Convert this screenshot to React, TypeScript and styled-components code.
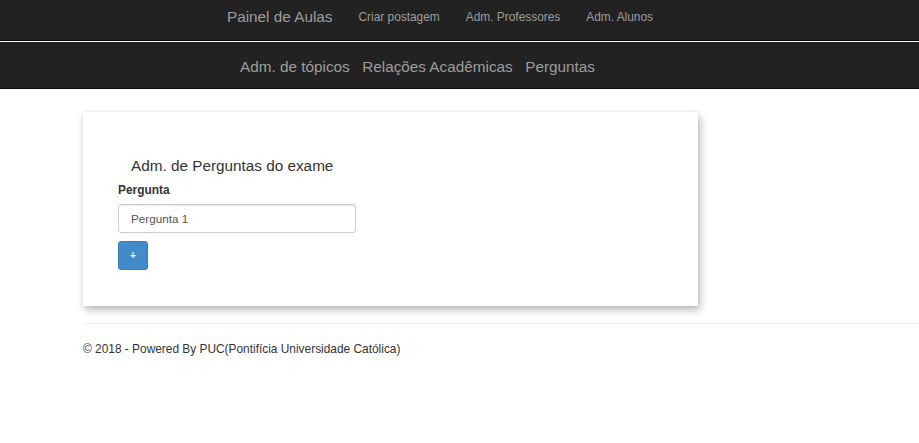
import React from "react";
import styled, { createGlobalStyle } from "styled-components";

const Global = createGlobalStyle`
  html, body { margin: 0; padding: 0; background: #fff; }
  body { font-family: "Liberation Sans", Arial, sans-serif; color: #333; }
  * { box-sizing: border-box; }
`;

const TopBar = styled.nav`
  height: 41px;
  background: #222;
  border-bottom: 1px solid #080808;
  display: flex;
  align-items: center;
  padding-left: 227px;
  padding-bottom: 6px;
  gap: 26px;
`;

const Brand = styled.a`
  font-size: 15.3px;
  color: #9d9d9d;
  text-decoration: none;
`;

const TopLink = styled.a`
  font-size: 11.9px;
  color: #9d9d9d;
  text-decoration: none;
`;

const Spacer = styled.div`
  height: 1px;
  background: #fff;
`;

const SubBar = styled.nav`
  height: 47px;
  background: #222;
  border-bottom: 1px solid #080808;
  display: flex;
  align-items: center;
  padding-left: 240px;
  padding-top: 3px;
  gap: 12.5px;
`;

const SubLink = styled.a`
  font-size: 15.3px;
  color: #9d9d9d;
  text-decoration: none;
`;

const Main = styled.main`
  padding-left: 83px;
  padding-top: 23px;
`;

const Card = styled.section`
  width: 615px;
  background: #fff;
  padding: 44px 35px 36px 35px;
  box-shadow: 2px 4px 8px rgba(0, 0, 0, 0.28), 0 0 2px rgba(0, 0, 0, 0.08);
`;

const Title = styled.h3`
  margin: 0 0 6px 0;
  padding-left: 13px;
  font-size: 15.3px;
  font-weight: normal;
  line-height: 20px;
  color: #333;
`;

const Label = styled.label`
  display: block;
  font-size: 11.9px;
  font-weight: bold;
  line-height: 16px;
  margin-bottom: 6px;
  color: #333;
`;

const Input = styled.input`
  display: block;
  width: 238px;
  height: 29px;
  border: 1px solid #ccc;
  border-radius: 3px;
  padding: 0 12px;
  font-family: "Liberation Sans", Arial, sans-serif;
  font-size: 11.7px;
  color: #555;
  box-shadow: inset 0 1px 1px rgba(0, 0, 0, 0.075);
  outline: none;
`;

const AddButton = styled.button`
  margin-top: 8px;
  width: 30px;
  height: 29px;
  background: #428bca;
  border: 1px solid #357ebd;
  border-radius: 3px;
  color: #fff;
  font-family: "Liberation Sans", Arial, sans-serif;
  font-size: 10.2px;
  font-weight: bold;
  display: flex;
  align-items: center;
  justify-content: center;
  padding: 0;
`;

const Footer = styled.footer`
  margin-top: 17px;
  margin-left: 83px;
`;

const Rule = styled.hr`
  margin: 0;
  border: 0;
  border-top: 1px solid #eee;
`;

const FooterText = styled.p`
  margin: 17px 0 0 0;
  font-size: 11.9px;
  line-height: 17px;
  color: #333;
`;

export default function App() {
  return (
    <>
      <Global />
      <TopBar>
        <Brand href="#">Painel de Aulas</Brand>
        <TopLink href="#">Criar postagem</TopLink>
        <TopLink href="#">Adm. Professores</TopLink>
        <TopLink href="#">Adm. Alunos</TopLink>
      </TopBar>
      <Spacer />
      <SubBar>
        <SubLink href="#">Adm. de tópicos</SubLink>
        <SubLink href="#">Relações Acadêmicas</SubLink>
        <SubLink href="#">Perguntas</SubLink>
      </SubBar>
      <Main>
        <Card>
          <Title>Adm. de Perguntas do exame</Title>
          <Label htmlFor="pergunta">Pergunta</Label>
          <Input id="pergunta" defaultValue="Pergunta 1" />
          <AddButton type="button">+</AddButton>
        </Card>
      </Main>
      <Footer>
        <Rule />
        <FooterText>© 2018 - Powered By PUC(Pontifícia Universidade Católica)</FooterText>
      </Footer>
    </>
  );
}
